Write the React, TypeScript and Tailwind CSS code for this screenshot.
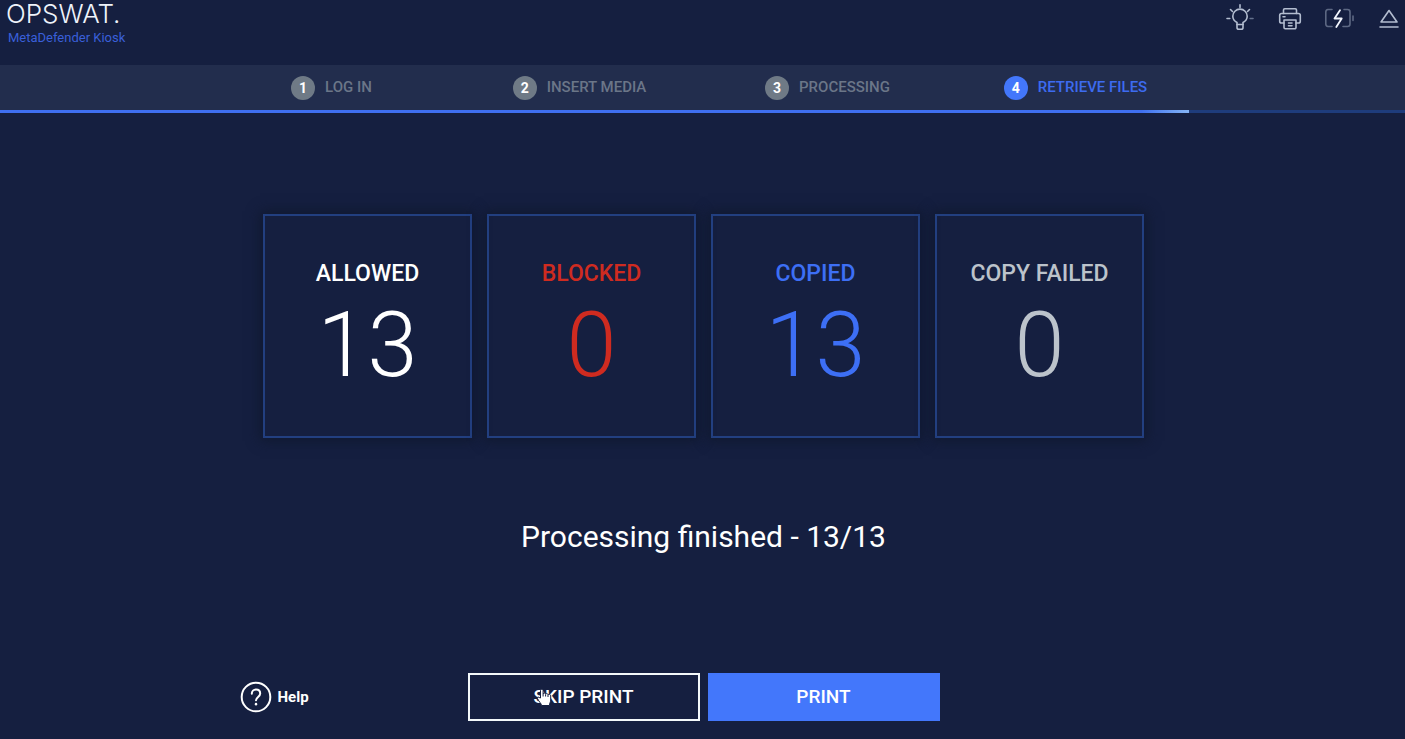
import type { ReactNode } from "react";
import clsx from "clsx";

type Step = { number: number; label: string };
type Stat = { label: string; value: number; color: string };

const STEPS: Step[] = [
  { number: 1, label: "LOG IN" },
  { number: 2, label: "INSERT MEDIA" },
  { number: 3, label: "PROCESSING" },
  { number: 4, label: "RETRIEVE FILES" },
];

const STATS: Stat[] = [
  { label: "ALLOWED", value: 13, color: "text-white" },
  { label: "BLOCKED", value: 0, color: "text-[#cf2b20]" },
  { label: "COPIED", value: 13, color: "text-[#3d6ff5]" },
  { label: "COPY FAILED", value: 0, color: "text-[#bcc3cb]" },
];

const CURRENT_STEP = 4;
const PROGRESS = 84.6;

function IconButton({ label, children }: { label: string; children: ReactNode }) {
  return (
    <button type="button" aria-label={label} className="size-[30px]">
      <svg
        viewBox="0 0 30 30"
        className="size-full"
        fill="none"
        stroke="#b3bdd0"
        strokeWidth="1.6"
        strokeLinecap="round"
        strokeLinejoin="round"
      >
        {children}
      </svg>
    </button>
  );
}

function Header() {
  return (
    <header className="flex h-[65px] items-start justify-between pl-1.5">
      <div>
        <p className="font-[Inter,sans-serif] text-[26px] leading-7 font-light text-[#eef3fa]">
          OPSWAT.
        </p>
        <p className="pl-0.5 text-[13px] leading-5 text-[#3a5fd9]">MetaDefender Kiosk</p>
      </div>
      <div className="flex gap-5 pt-1">
        <IconButton label="Light">
          <path d="M12 20.5v-2c-2.600-1.300-4.200-3.500-4.200-6.200a7.200 7.200 0 0 1 14.400 0c0 2.700-1.600 4.900-4.200 6.200v2z" />
          <path d="M12 20.500v3a1.800 1.800 0 0 0 1.800 1.800h2.400a1.800 1.800 0 0 0 1.800-1.800v-3" />
          <path d="M15 .800v2.700M5.500 5.500l2 2M24.500 5.500l-2 2M2 14.500h2.800" />
          <path d="M25.200 14.500H28" stroke="#64718c" />
        </IconButton>
        <IconButton label="Printer">
          <path d="M8.500 9.500V6a1.200 1.200 0 0 1 1.200-1.200h10.600A1.200 1.200 0 0 1 21.500 6v3.500" />
          <path d="M9 19H6.500a1.800 1.800 0 0 1-1.800-1.800v-5.900a1.800 1.800 0 0 1 1.800-1.800h17a1.800 1.800 0 0 1 1.800 1.800v5.900a1.800 1.800 0 0 1-1.800 1.800H21" />
          <path d="M9 16h12v7.500a1.200 1.200 0 0 1-1.200 1.200h-9.600A1.200 1.200 0 0 1 9 23.500zM13.500 19h3.500M13.500 21.800h3.500M8 12.700h2" />
        </IconButton>
        <IconButton label="Battery">
          <path
            d="M7 5.500H3A2.500 2.500 0 0 0 .800 8v12A2.500 2.500 0 0 0 3 22.500h4M19 5.500h3.500A2.500 2.500 0 0 1 25 8v12a2.500 2.500 0 0 1-2.500 2.500H18M28 12v4.500"
            stroke="#5d6883"
          />
          <path d="M15 6.200L9.500 14.500h7.200L11.300 23" stroke="#f1f5fc" strokeWidth="1.800" />
        </IconButton>
        <IconButton label="Eject">
          <path d="M14 6.500l8 11.500H6zM5 23h18" />
        </IconButton>
      </div>
    </header>
  );
}

function Stepper() {
  return (
    <nav aria-label="Steps" className="bg-[#222d4d]">
      <ol className="mx-auto grid h-[45px] max-w-[994px] grid-cols-4 pl-0.5">
        {STEPS.map((step) => {
          const active = step.number === CURRENT_STEP;
          return (
            <li
              key={step.number}
              aria-current={active ? "step" : undefined}
              className="flex items-center justify-center gap-2.5"
            >
              <span
                className={clsx(
                  "flex size-6 items-center justify-center rounded-full text-sm font-bold text-white",
                  active ? "bg-[#4377fb]" : "bg-[#6f7a86]",
                )}
              >
                {step.number}
              </span>
              <span
                className={clsx(
                  "text-[15px] font-medium",
                  active ? "text-[#3d6bf0]" : "text-[#6b7688]",
                )}
              >
                {step.label}
              </span>
            </li>
          );
        })}
      </ol>
      <div
        role="progressbar"
        aria-label="Progress"
        aria-valuenow={PROGRESS}
        className="h-[3px] bg-[#1e3c7c]"
      >
        <div
          className="h-full bg-linear-to-r from-[#3f6ff0] from-96% to-[#86b4f5]"
          style={{ width: `${PROGRESS}%` }}
        />
      </div>
    </nav>
  );
}

function StatCard({ stat }: { stat: Stat }) {
  return (
    <section
      className={clsx(
        "flex h-56 flex-col items-center border-2 border-[#223f80] pt-10 shadow-[0_0_12px_3px_#101930]",
        stat.color,
      )}
    >
      <h2 className="text-[23px] leading-9 font-medium">{stat.label}</h2>
      <p className="text-[90px] leading-[108px] font-light">{stat.value}</p>
    </section>
  );
}

function HandCursor() {
  return (
    <svg
      viewBox="0 0 16 20"
      className="pointer-events-none absolute top-3 left-[66px] h-5 w-4"
      fill="#fff"
      stroke="#151f40"
      strokeWidth="1"
      strokeLinejoin="round"
      aria-hidden="true"
    >
      <path d="M4.500 11V3.500a1.300 1.300 0 0 1 2.600 0V7c.4-1.300 2.300-1.200 2.500.2.600-1 2.200-.8 2.400.5.700-.7 2.700-.3 2.700 1.100V13c0 1.800-1.200 3-1.200 5.500H5.500c0-2-3-4.200-4-7-.3-1.200 1-1.800 1.800-1z" />
      <path d="M7.100 7v2.500M9.600 7.500v2M12 8v2" />
    </svg>
  );
}

export default function App() {
  return (
    <div className="flex min-h-screen flex-col bg-[#151f40] font-[Roboto,sans-serif]">
      <Header />
      <Stepper />
      <main className="flex grow flex-col items-center pt-[101px] pl-0.5">
        <div className="grid w-full max-w-[881px] grid-cols-4 gap-[15px]">
          {STATS.map((stat) => (
            <StatCard key={stat.label} stat={stat} />
          ))}
        </div>
        <p className="pt-[79px] text-[30px] leading-10 text-white">Processing finished - 13/13</p>
      </main>
      <footer className="mx-auto grid w-full max-w-[930px] grid-cols-[1fr_auto_1fr] items-center pb-[18px] pl-0.5 text-white">
        <a href="#help" className="flex items-center gap-1.5 justify-self-start text-[15px] font-bold">
          <svg
            viewBox="0 0 32 32"
            className="size-8"
            fill="none"
            stroke="currentColor"
            strokeWidth="2"
            strokeLinecap="round"
            strokeLinejoin="round"
            aria-hidden="true"
          >
            <circle cx="16" cy="16" r="14.300" />
            <path d="M11.800 12.800c0-2.500 1.800-4.300 4.200-4.300s4.200 1.600 4.200 4c0 3.300-4.200 3.500-4.200 6.800" />
            <path d="M16 23v.300" strokeWidth="2.500" />
          </svg>
          Help
        </a>
        <div className="flex gap-2">
          <button
            type="button"
            className="relative h-12 w-[232px] border-2 border-[#f3f8fa] text-[19px] font-medium"
          >
            SKIP PRINT
            <HandCursor />
          </button>
          <button type="button" className="h-12 w-[232px] bg-[#4377fb] text-[19px] font-medium">
            PRINT
          </button>
        </div>
      </footer>
    </div>
  );
}
